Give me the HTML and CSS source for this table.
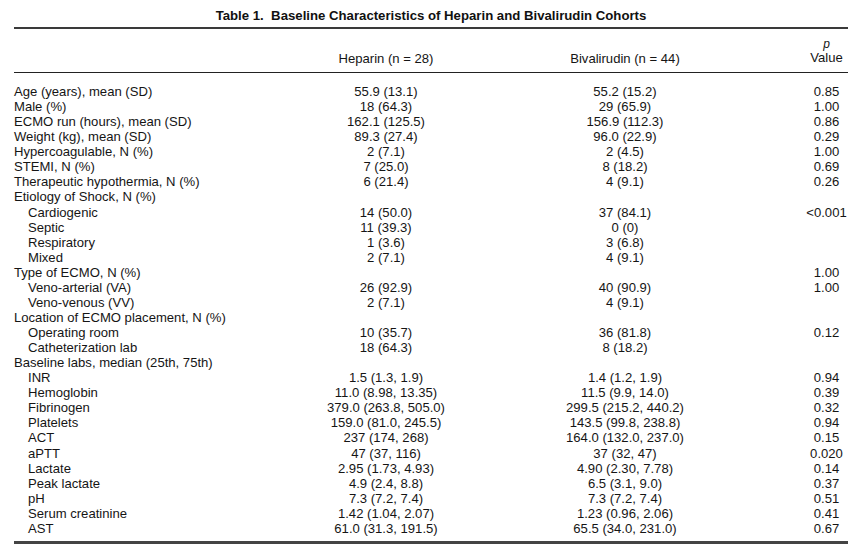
FILE: index.html
```html
<!DOCTYPE html>
<html lang="en">
<head>
<meta charset="utf-8">
<title>Table 1</title>
<link rel="stylesheet" href="styles.css">
</head>
<body>
<div class="page">
  <h1 class="title">Table 1.&nbsp; Baseline Characteristics of Heparin and Bivalirudin Cohorts</h1>
  <table class="tbl">
    <colgroup>
      <col class="c-label">
      <col class="c-hep">
      <col class="c-biv">
      <col class="c-p">
    </colgroup>
    <thead>
      <tr>
        <th class="lbl"></th>
        <th>Heparin (n = 28)</th>
        <th>Bivalirudin (n = 44)</th>
        <th class="pv"><span class="pi">p</span><span class="pval">Value</span></th>
      </tr>
    </thead>
    <tbody>
      <tr><td class="lbl">Age (years), mean (SD)</td><td>55.9 (13.1)</td><td>55.2 (15.2)</td><td class="pv">0.85</td></tr>
      <tr><td class="lbl">Male (%)</td><td>18 (64.3)</td><td>29 (65.9)</td><td class="pv">1.00</td></tr>
      <tr><td class="lbl">ECMO run (hours), mean (SD)</td><td>162.1 (125.5)</td><td>156.9 (112.3)</td><td class="pv">0.86</td></tr>
      <tr><td class="lbl">Weight (kg), mean (SD)</td><td>89.3 (27.4)</td><td>96.0 (22.9)</td><td class="pv">0.29</td></tr>
      <tr><td class="lbl">Hypercoagulable, N (%)</td><td>2 (7.1)</td><td>2 (4.5)</td><td class="pv">1.00</td></tr>
      <tr><td class="lbl">STEMI, N (%)</td><td>7 (25.0)</td><td>8 (18.2)</td><td class="pv">0.69</td></tr>
      <tr><td class="lbl">Therapeutic hypothermia, N (%)</td><td>6 (21.4)</td><td>4 (9.1)</td><td class="pv">0.26</td></tr>
      <tr><td class="lbl">Etiology of Shock, N (%)</td><td></td><td></td><td class="pv"></td></tr>
      <tr><td class="lbl sub">Cardiogenic</td><td>14 (50.0)</td><td>37 (84.1)</td><td class="pv">&lt;0.001</td></tr>
      <tr><td class="lbl sub">Septic</td><td>11 (39.3)</td><td>0 (0)</td><td class="pv"></td></tr>
      <tr><td class="lbl sub">Respiratory</td><td>1 (3.6)</td><td>3 (6.8)</td><td class="pv"></td></tr>
      <tr><td class="lbl sub">Mixed</td><td>2 (7.1)</td><td>4 (9.1)</td><td class="pv"></td></tr>
      <tr><td class="lbl">Type of ECMO, N (%)</td><td></td><td></td><td class="pv">1.00</td></tr>
      <tr><td class="lbl sub">Veno-arterial (VA)</td><td>26 (92.9)</td><td>40 (90.9)</td><td class="pv">1.00</td></tr>
      <tr><td class="lbl sub">Veno-venous (VV)</td><td>2 (7.1)</td><td>4 (9.1)</td><td class="pv"></td></tr>
      <tr><td class="lbl">Location of ECMO placement, N (%)</td><td></td><td></td><td class="pv"></td></tr>
      <tr><td class="lbl sub">Operating room</td><td>10 (35.7)</td><td>36 (81.8)</td><td class="pv">0.12</td></tr>
      <tr><td class="lbl sub">Catheterization lab</td><td>18 (64.3)</td><td>8 (18.2)</td><td class="pv"></td></tr>
      <tr><td class="lbl">Baseline labs, median (25th, 75th)</td><td></td><td></td><td class="pv"></td></tr>
      <tr><td class="lbl sub">INR</td><td>1.5 (1.3, 1.9)</td><td>1.4 (1.2, 1.9)</td><td class="pv">0.94</td></tr>
      <tr><td class="lbl sub">Hemoglobin</td><td>11.0 (8.98, 13.35)</td><td>11.5 (9.9, 14.0)</td><td class="pv">0.39</td></tr>
      <tr><td class="lbl sub">Fibrinogen</td><td>379.0 (263.8, 505.0)</td><td>299.5 (215.2, 440.2)</td><td class="pv">0.32</td></tr>
      <tr><td class="lbl sub">Platelets</td><td>159.0 (81.0, 245.5)</td><td>143.5 (99.8, 238.8)</td><td class="pv">0.94</td></tr>
      <tr><td class="lbl sub">ACT</td><td>237 (174, 268)</td><td>164.0 (132.0, 237.0)</td><td class="pv">0.15</td></tr>
      <tr><td class="lbl sub">aPTT</td><td>47 (37, 116)</td><td>37 (32, 47)</td><td class="pv">0.020</td></tr>
      <tr><td class="lbl sub">Lactate</td><td>2.95 (1.73, 4.93)</td><td>4.90 (2.30, 7.78)</td><td class="pv">0.14</td></tr>
      <tr><td class="lbl sub">Peak lactate</td><td>4.9 (2.4, 8.8)</td><td>6.5 (3.1, 9.0)</td><td class="pv">0.37</td></tr>
      <tr><td class="lbl sub">pH</td><td>7.3 (7.2, 7.4)</td><td>7.3 (7.2, 7.4)</td><td class="pv">0.51</td></tr>
      <tr><td class="lbl sub">Serum creatinine</td><td>1.42 (1.04, 2.07)</td><td>1.23 (0.96, 2.06)</td><td class="pv">0.41</td></tr>
      <tr><td class="lbl sub">AST</td><td>61.0 (31.3, 191.5)</td><td>65.5 (34.0, 231.0)</td><td class="pv">0.67</td></tr>
    </tbody>
  </table>
</div>
</body>
</html>
```

FILE: styles.css
```css
html, body {
  margin: 0;
  padding: 0;
  background: #ffffff;
}

.page {
  width: 834px;
  padding: 8px 0 0 14px;
  font-family: "Liberation Sans", Arial, Helvetica, sans-serif;
  color: #151515;
}

.title {
  margin: 0;
  font-size: 13.2px;
  line-height: 15px;
  font-weight: bold;
  text-align: center;
  color: #111;
}

.tbl {
  margin-top: 4px;
  width: 834px;
  table-layout: fixed;
  border-collapse: collapse;
  font-size: 13.1px;
  border-top: 2px solid #3a3a3a;
  border-bottom: 3px solid #444;
}

.c-label { width: 282px; }
.c-hep { width: 180px; }
.c-biv { width: 298px; }
.c-p { width: 74px; }

.tbl th,
.tbl td {
  padding: 0;
  font-weight: normal;
  text-align: center;
  white-space: nowrap;
}

.tbl thead th {
  vertical-align: bottom;
  line-height: 13px;
  padding-top: 9px;
  padding-bottom: 7px;
  border-bottom: 1px solid #222;
}

.pi {
  display: block;
  font-style: italic;
  font-size: 12px;
  line-height: 12px;
}

.pval {
  display: block;
  line-height: 15px;
}

.tbl tbody td {
  line-height: 15.07px;
}

.tbl tbody tr:first-child td {
  padding-top: 11px;
}

.tbl tbody tr:last-child td {
  padding-bottom: 5px;
}

.tbl .lbl {
  text-align: left;
}

.tbl .sub {
  padding-left: 14px;
}

.tbl .pv {
  padding-left: 31px;
}
```
